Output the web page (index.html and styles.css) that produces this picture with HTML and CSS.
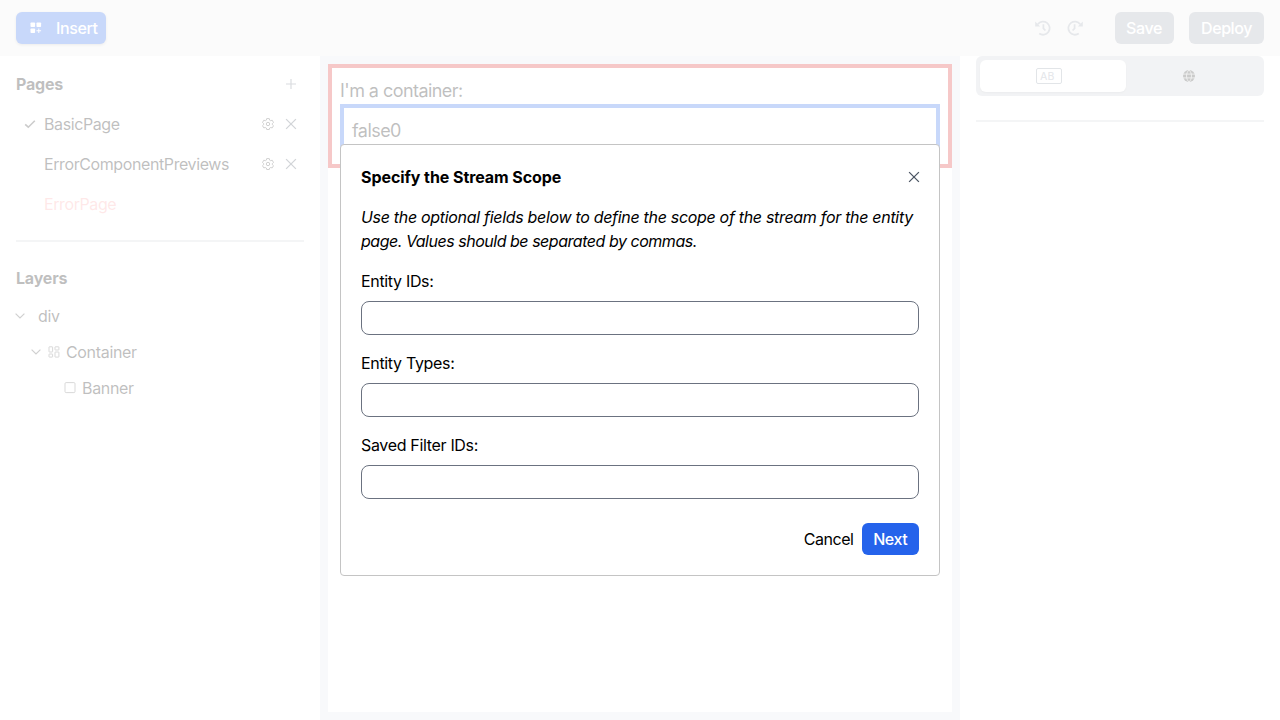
FILE: index.html
```html
<!DOCTYPE html>
<html lang="en">
<head>
<meta charset="utf-8">
<title>Studio</title>
<link rel="stylesheet" href="styles.css">
</head>
<body>
<div class="app">
  <header class="topbar">
    <button class="btn insert">
      <svg class="blocks" width="12" height="12" viewBox="0 0 12 12"><rect x=".5" y=".5" width="4.6" height="4.6" rx=".8"/><rect x="6.5" y=".5" width="4.6" height="4.6" rx=".8"/><rect x=".5" y="6.5" width="4.6" height="4.6" rx=".8"/><path d="M8.3 6.5h1v1.8h1.8v1H9.3v1.8h-1V9.3H6.5v-1h1.8z"/></svg>
      <span>Insert</span>
    </button>
    <div class="actions">
      <svg class="history" width="18" height="18" viewBox="0 0 18 18"><path d="M3.8 5.2A6.6 6.6 0 1 1 5.2 14.5M9.4 5.3v4l2 2.2"/><path class="solid" d="M1.2 2.4v5h5z"/></svg>
      <svg class="history redo" width="18" height="18" viewBox="0 0 18 18"><path d="M14.2 5.2A6.6 6.6 0 1 0 12.8 14.5M8.6 5.3v4l-2 2.2"/><path class="solid" d="M16.8 2.4v5h-5z"/></svg>
      <button class="btn muted save">Save</button>
      <button class="btn muted deploy">Deploy</button>
    </div>
  </header>
  <div class="workspace">
    <aside class="left">
      <div class="heading"><h2>Pages</h2>
        <svg class="line" width="12" height="12" viewBox="0 0 12 12"><path d="M6 1v10M1 6h10"/></svg>
      </div>
      <div class="page">
        <svg class="check" width="12" height="12" viewBox="0 0 12 12"><path d="M1.2 6.3 4.3 9.2 10.8 2.8"/></svg>
        <span class="page-name">BasicPage</span>
        <svg class="gear" width="12" height="12" viewBox="0 0 12 12"><path d="M4.7.6h2.6l.4 1.6.9.5 1.6-.5 1.3 2.3-1.2 1.1v1l1.2 1.1-1.3 2.2-1.6-.4-.9.5-.4 1.5H4.7L4.3 10l-.9-.5-1.6.4L.5 7.7l1.2-1.1v-1L.5 4.5l1.3-2.3 1.6.5.9-.5z"/><circle cx="6" cy="6" r="1.7"/></svg>
        <svg class="line cross" width="12" height="12" viewBox="0 0 12 12"><path d="m1.1 1.1 9.8 9.8M10.9 1.1l-9.8 9.8"/></svg>
      </div>
      <div class="page">
        <span class="check"></span>
        <span class="page-name">ErrorComponentPreviews</span>
        <svg class="gear" width="12" height="12" viewBox="0 0 12 12"><path d="M4.7.6h2.6l.4 1.6.9.5 1.6-.5 1.3 2.3-1.2 1.1v1l1.2 1.1-1.3 2.2-1.6-.4-.9.5-.4 1.5H4.7L4.3 10l-.9-.5-1.6.4L.5 7.7l1.2-1.1v-1L.5 4.5l1.3-2.3 1.6.5.9-.5z"/><circle cx="6" cy="6" r="1.7"/></svg>
        <svg class="line cross" width="12" height="12" viewBox="0 0 12 12"><path d="m1.1 1.1 9.8 9.8M10.9 1.1l-9.8 9.8"/></svg>
      </div>
      <div class="page"><span class="check"></span><span class="page-name error">ErrorPage</span></div>
      <hr class="rule">
      <h2 class="layers-title">Layers</h2>
      <div class="layer depth-0">
        <svg class="chevron" width="10" height="6" viewBox="0 0 10 6"><path d="m.6.6 4.4 4.3L9.4.6"/></svg>
        <span class="layer-name root">div</span>
      </div>
      <div class="layer depth-1">
        <svg class="chevron" width="10" height="6" viewBox="0 0 10 6"><path d="m.6.6 4.4 4.3L9.4.6"/></svg>
        <svg class="kind" width="12" height="12" viewBox="0 0 12 12"><rect x="1" y=".8" width="3.6" height="5.2" rx=".4"/><rect x="7" y=".8" width="3.9" height="3.2" rx=".4"/><rect x="1" y="8" width="3.6" height="3.1" rx=".4"/><rect x="7" y="6" width="3.9" height="5.1" rx=".4"/></svg>
        <span class="layer-name">Container</span>
      </div>
      <div class="layer depth-2">
        <svg class="kind" width="12" height="12" viewBox="0 0 12 12"><rect x="1" y=".6" width="10" height="10" rx="1.1"/></svg>
        <span class="layer-name">Banner</span>
      </div>
    </aside>
    <main class="canvas">
      <div class="sheet">
        <div class="container-box">
          <div class="container-label">I'm a container:</div>
          <div class="banner-box">false0</div>
        </div>
      </div>
    </main>
    <aside class="right">
      <div class="tabs">
        <div class="tab active"><span class="ab">AB</span></div>
        <div class="tab">
          <svg width="12" height="12" viewBox="0 0 12 12"><circle cx="6" cy="6" r="6" fill="#333"/><path d="M0 4.1h12M0 7.9h12M6 0C2.7 3 2.7 9 6 12 9.3 9 9.3 3 6 0" fill="none" stroke="#ddd" stroke-width=".8"/></svg>
        </div>
      </div>
      <hr class="rule">
    </aside>
  </div>
</div>
<div class="backdrop">
  <section class="modal">
    <div class="modal-head"><h1>Specify the Stream Scope</h1>
      <svg class="close" width="12" height="12" viewBox="0 0 12 12"><path d="m1.1 1.1 9.8 9.8M10.9 1.1l-9.8 9.8"/></svg>
    </div>
    <p class="description">Use the optional fields below to define the scope of the stream for the entity<br><span class="last-line">page. Values should be separated by commas.</span></p>
    <label class="field"><span>Entity IDs:</span><input type="text"></label>
    <label class="field"><span>Entity Types:</span><input type="text"></label>
    <label class="field"><span>Saved Filter IDs:</span><input type="text"></label>
    <div class="modal-foot"><button class="cancel">Cancel</button><button class="btn next">Next</button></div>
  </section>
</div>
</body>
</html>
```
FILE: styles.css
```css
* { box-sizing: border-box; }
body, h1, h2, p { margin: 0; }
body { font: 16px/24px Inter, "Liberation Sans", sans-serif; color: #000; letter-spacing: -.33px; overflow: hidden; }
h1, h2 { font-size: 16px; line-height: 24px; font-weight: 700; letter-spacing: -.2px; }
h1 { letter-spacing: -.07px; }
button { font: inherit; letter-spacing: inherit; border: 0; padding: 0; background: none; color: inherit; }
svg { display: block; flex: none; fill: none; }
.app { height: 720px; display: flex; flex-direction: column; background: #fff; }
.topbar { height: 56px; flex: none; display: flex; align-items: center; justify-content: space-between; padding: 0 16px; background: #f0f0f0; }
.btn { height: 32px; border-radius: 6px; color: #fff; display: flex; align-items: center; justify-content: center; font-weight: 500; letter-spacing: -.4px; }
.insert { width: 89.5px; gap: 14px; padding-left: 6px; background: #2563eb; box-shadow: 0 1px 3px #0004; }
.blocks { fill: #fff; }
.actions { display: flex; align-items: center; }
.history { stroke: #9ca3af; stroke-width: 1.8; }
.history .solid { fill: #9ca3af; stroke: none; }
.redo { margin: 0 31px 0 14px; }
.muted { background: #9ca3af; }
.save { width: 59px; margin-right: 15.5px; }
.deploy { width: 75px; }
.workspace { flex: 1; display: flex; }
.left { width: 320px; padding: 8px 16px; }
.heading { height: 40px; display: flex; align-items: center; justify-content: space-between; padding-right: 7px; }
.line { stroke: #6b7280; stroke-width: 1.2; }
.cross { stroke: #4b5563; stroke-width: 1.3; }
.page { height: 40px; display: flex; align-items: center; padding: 0 7px 0 8px; }
.check { width: 12px; margin-right: 8px; stroke: #333; stroke-width: 1.6; }
.page-name { flex: 1; letter-spacing: -.4px; }
.gear { margin-right: 11px; stroke: #333; stroke-width: .9; }
.page-name.error { color: #fca5a5; letter-spacing: -.4px; }
.rule { border: 0; height: 2px; margin: 16px 0 24px; background: #d1d5db; }
.layers-title { margin-bottom: 8px; }
.layer { height: 36px; display: flex; align-items: center; }
.depth-1 { padding-left: 15px; }
.depth-2 { padding-left: 48px; }
.depth-0 .chevron { margin-left: -1px; }
.chevron { stroke: #444; stroke-width: 1.2; margin-right: 7px; }
.root { margin-left: 6px; }
.kind { stroke: #555; stroke-width: .9; margin-right: 6px; }
.canvas { width: 640px; padding: 8px; background: #e2e8f0; }
.sheet { height: 648px; background: #fff; font-size: 18px; letter-spacing: -.55px; }
.container-box { height: 104px; border: 4px solid #dc2626; padding: 8px; line-height: 30px; }
.container-label { height: 28px; }
.banner-box { height: 52px; border: 4px solid #2563eb; padding: 8px; }
.right { width: 320px; padding: 0 16px; }
.tabs { height: 40px; display: flex; padding: 4px; border-radius: 6px; background: #ccd0d6; }
.tab { flex: 1; display: flex; align-items: center; justify-content: center; padding-right: 8px; }
.tab.active { flex: none; width: 146px; background: #fff; border-radius: 6px; box-shadow: 0 1px 2px #0002; }
.ab { width: 26px; height: 16px; border: 1px solid #8b96a5; border-radius: 2px; padding-left: 3px; color: #9ca3af; font-size: 10.5px; font-weight: 500; line-height: 15px; letter-spacing: 0; }
.right .rule { margin-top: 24px; }
.backdrop { position: fixed; inset: 0; background: rgba(255,255,255,.75); display: flex; align-items: center; justify-content: center; }
.modal { width: 600px; height: 432px; padding: 20px; border: 1px solid #c4c4c4; border-radius: 4px; background: #fff; }
.modal-head { display: flex; align-items: center; justify-content: space-between; margin-bottom: 16px; }
.close { stroke: #4b5563; stroke-width: 1.3; margin-right: -1px; }
.description { font-style: italic; margin-bottom: 16px; white-space: nowrap; letter-spacing: -.31px; }
.last-line { letter-spacing: -.47px; }
.field { display: block; height: 82px; }
.field span { display: block; height: 32px; }
.field input { display: block; width: 558px; height: 34px; border: 1px solid #6b7280; border-radius: 8px; padding: 0 8px; font: inherit; }
.modal-foot { display: flex; justify-content: flex-end; align-items: center; gap: 8px; margin-top: 8px; }
.next { width: 57.5px; background: #2563eb; }
.cancel { letter-spacing: -.45px; }
```
